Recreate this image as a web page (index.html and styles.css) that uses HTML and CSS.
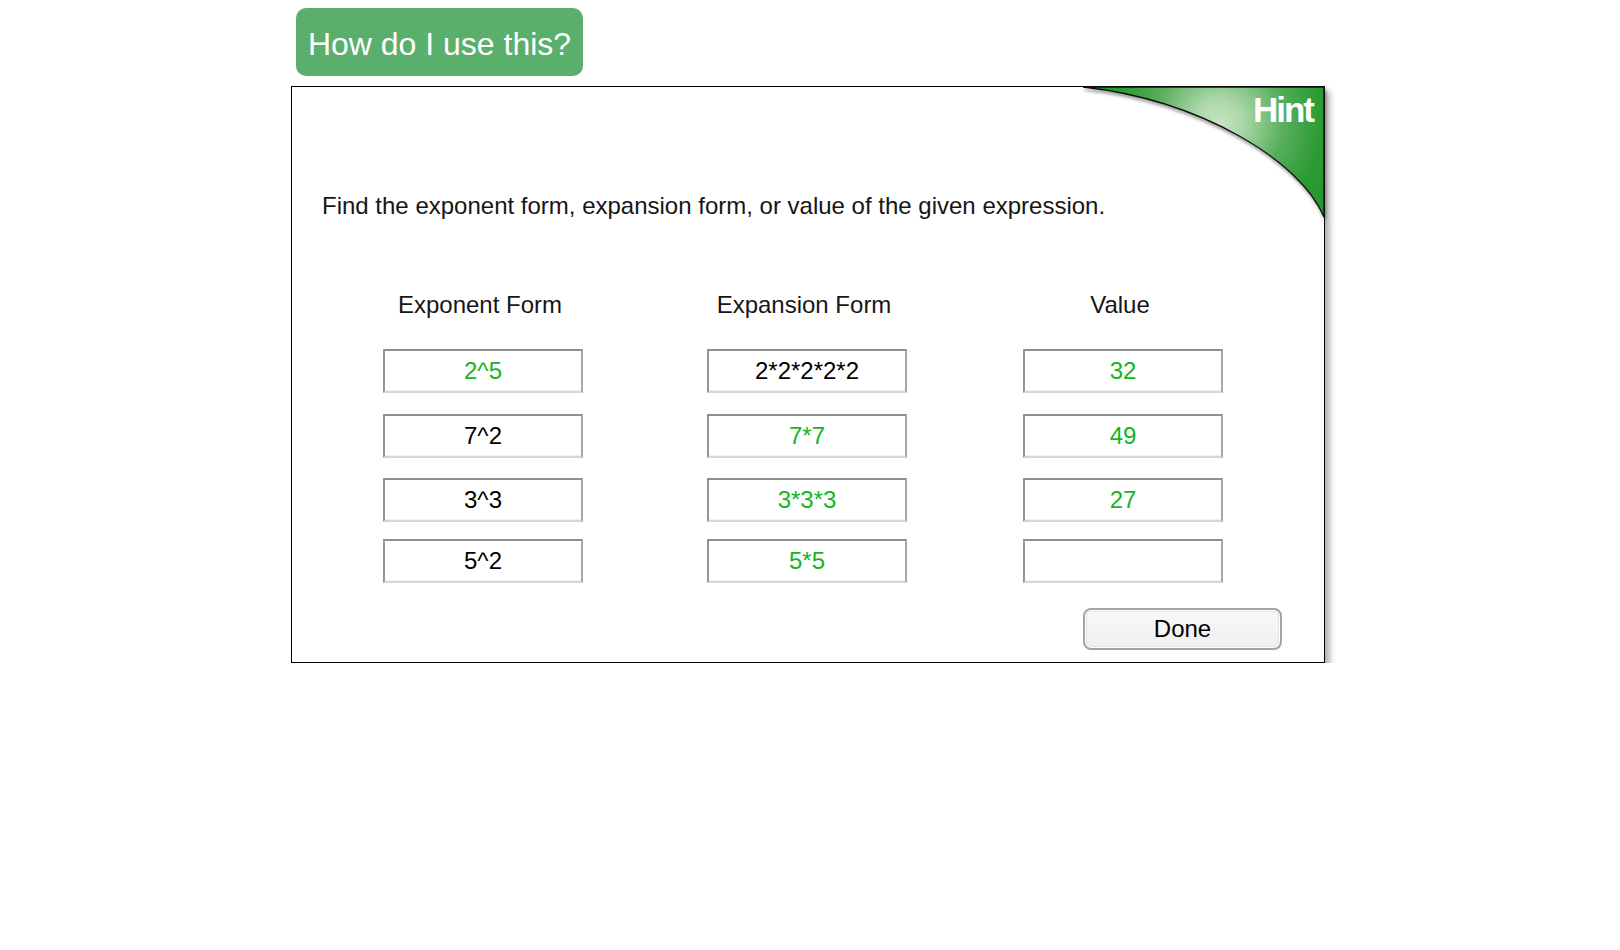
FILE: index.html
```html
<!DOCTYPE html>
<html lang="en">
<head>
<meta charset="utf-8">
<title>Exponent Forms</title>
<link rel="stylesheet" href="styles.css">
</head>
<body>
<div class="page">
  <button class="help">How do I use this?</button>
  <div class="panel">
    <div class="hint">
      <svg class="hint-shape" width="250" height="145" viewBox="0 0 250 145">
        <defs>
          <radialGradient id="hg" gradientUnits="userSpaceOnUse" cx="136" cy="36" r="118">
            <stop offset="0" stop-color="#c6e4c4"/>
            <stop offset="0.2" stop-color="#acd8aa"/>
            <stop offset="0.55" stop-color="#58ae5c"/>
            <stop offset="0.85" stop-color="#2d9c34"/>
            <stop offset="1" stop-color="#28982f"/>
          </radialGradient>
          <filter id="hs" x="-10%" y="-10%" width="130%" height="140%">
            <feDropShadow dx="1" dy="3" stdDeviation="1.6" flood-color="#000" flood-opacity="0.35"/>
          </filter>
        </defs>
        <path d="M0,0 L241,0 L241,130 C217,73 117,13 0,0 Z" fill="url(#hg)" stroke="#111" stroke-width="1.3" filter="url(#hs)"/>
      </svg>
      <span class="hint-label">Hint</span>
    </div>
    <p class="prompt">Find the exponent form, expansion form, or value of the given expression.</p>
    <div class="table">
      <div class="head">Exponent Form</div>
      <div class="head">Expansion Form</div>
      <div class="head">Value</div>

      <div class="field ok">2^5</div>
      <div class="field">2*2*2*2*2</div>
      <div class="field ok">32</div>

      <div class="field r2">7^2</div>
      <div class="field r2 ok">7*7</div>
      <div class="field r2 ok">49</div>

      <div class="field r3">3^3</div>
      <div class="field r3 ok">3*3*3</div>
      <div class="field r3 ok">27</div>

      <div class="field r4">5^2</div>
      <div class="field r4 ok">5*5</div>
      <div class="field r4"></div>
    </div>
    <div class="actions">
      <button class="done">Done</button>
    </div>
  </div>
</div>
</body>
</html>
```
FILE: styles.css
```css
html, body {
  margin: 0;
  padding: 0;
  background: #ffffff;
}

body {
  font-family: "Liberation Sans", Arial, Helvetica, sans-serif;
  color: #111;
}

.page {
  padding: 8px 0 0 291px;
}

.help {
  display: block;
  margin-left: 5px;
  width: 287px;
  height: 68px;
  padding: 4px 0 0 0;
  border: none;
  border-radius: 10px;
  background: #5aaf6d;
  color: #ffffff;
  font-family: "Liberation Sans", Arial, Helvetica, sans-serif;
  font-size: 32px;
  line-height: 64px;
  text-align: center;
}

.panel {
  position: relative;
  margin-top: 10px;
  width: 1032px;
  border: 1px solid #000;
  background: #fff;
  box-shadow: 5px 5px 6px rgba(0, 0, 0, 0.3);
  padding: 105px 0 12px 0;
}

.hint {
  position: absolute;
  top: 0;
  right: 0;
  width: 241px;
  height: 130px;
}

.hint-shape {
  position: absolute;
  top: 0;
  left: 0;
  overflow: visible;
}

.hint-label {
  position: absolute;
  top: 5px;
  right: 11px;
  font-family: "Liberation Sans", Arial, Helvetica, sans-serif;
  font-weight: bold;
  font-size: 35px;
  line-height: 35px;
  letter-spacing: -2px;
  color: #ffffff;
}

.prompt {
  margin: 0 0 0 30px;
  font-size: 24px;
  line-height: 28px;
  color: #161616;
}

.table {
  display: grid;
  grid-template-columns: 324px 316px 200px;
  row-gap: 0;
  margin: 71px 0 0 91px;
}

.head {
  width: 200px;
  font-size: 24px;
  line-height: 28px;
  text-align: center;
  padding-right: 6px;
  box-sizing: border-box;
  margin-bottom: 30px;
  color: #161616;
}

.field {
  box-sizing: border-box;
  width: 200px;
  height: 44px;
  border-style: solid;
  border-width: 2px;
  border-color: #8a9190 #a4aaa9 #d4d9d8 #8f9695;
  box-shadow: inset 0 -1px 0 #eef1f0;
  background: #fff;
  font-size: 24px;
  line-height: 40px;
  text-align: center;
  color: #000;
}

.field.r2 {
  margin-top: 21px;
}

.field.r3 {
  margin-top: 20px;
}

.field.r4 {
  margin-top: 17px;
}

.field.ok {
  color: #16b41f;
}

.actions {
  display: flex;
  justify-content: flex-end;
  margin-top: 25px;
  padding-right: 42px;
}

.done {
  box-sizing: border-box;
  width: 199px;
  height: 42px;
  padding: 0;
  border: 2px solid #a0a6a3;
  border-radius: 8px;
  background: linear-gradient(#f8f8f8, #f0f0f0);
  box-shadow: inset 0 0 0 1px #ffffff, inset 0 0 0 2px #dfe3e1;
  font-family: "Liberation Sans", Arial, Helvetica, sans-serif;
  font-size: 24px;
  line-height: 38px;
  color: #000;
  text-align: center;
}
```
